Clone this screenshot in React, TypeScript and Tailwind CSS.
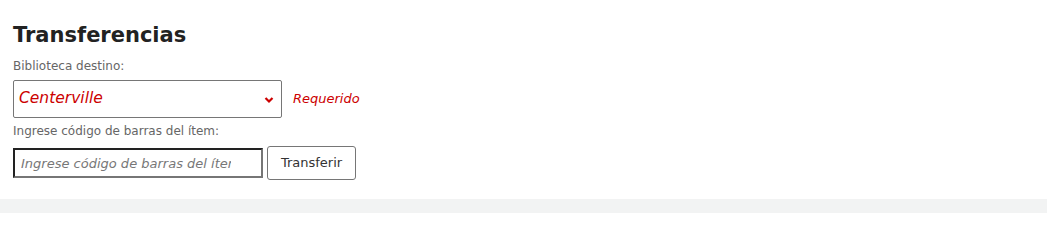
export default function App() {
  return (
    <div className="w-[1047px] h-[213px] bg-white flex flex-col font-['DejaVu_Sans',sans-serif]">
      <div className="flex-1 px-[13px] pt-[22px]">
        <h2 className="text-[21px] font-bold leading-[26px] text-[#222]">Transferencias</h2>
        <label className="block mt-[10px] text-[12px] leading-[16px] text-[#666]">Biblioteca destino:</label>
        <div className="flex items-center mt-[6px]">
          <div className="relative w-[269px] h-[38px] border border-[#767676] rounded-[2px] flex items-center px-[5px]">
            <span className="italic text-[15.5px] text-[#c00]">Centerville</span>
            <svg className="absolute right-[7px] top-[15px]" width="10" height="8" viewBox="0 0 10 8">
              <path d="M1.5 2 L5 5.5 L8.5 2" stroke="#c00" strokeWidth="2.2" fill="none" />
            </svg>
          </div>
          <span className="ml-[11px] italic text-[13px] text-[#c00]">Requerido</span>
        </div>
        <label className="block mt-[5px] text-[12px] leading-[16px] text-[#666]">Ingrese código de barras del ítem:</label>
        <div className="flex items-center mt-[7px] gap-[4px]">
          <div className="w-[250px] h-[30px] border-2 border-t-[#222] border-l-[#222] border-b-[#767676] border-r-[#767676] flex items-center pl-[6px] pr-[30px]">
            <div className="overflow-hidden whitespace-nowrap">
              <span className="italic text-[13px] text-[#777]">Ingrese código de barras del ítem</span>
            </div>
          </div>
          <button className="w-[89px] h-[34px] border border-[#767676] rounded-[3px] text-[13px] text-[#333] bg-white">Transferir</button>
        </div>
      </div>
      <div className="h-[14px] bg-[#f2f3f3]" />
    </div>
  );
}
